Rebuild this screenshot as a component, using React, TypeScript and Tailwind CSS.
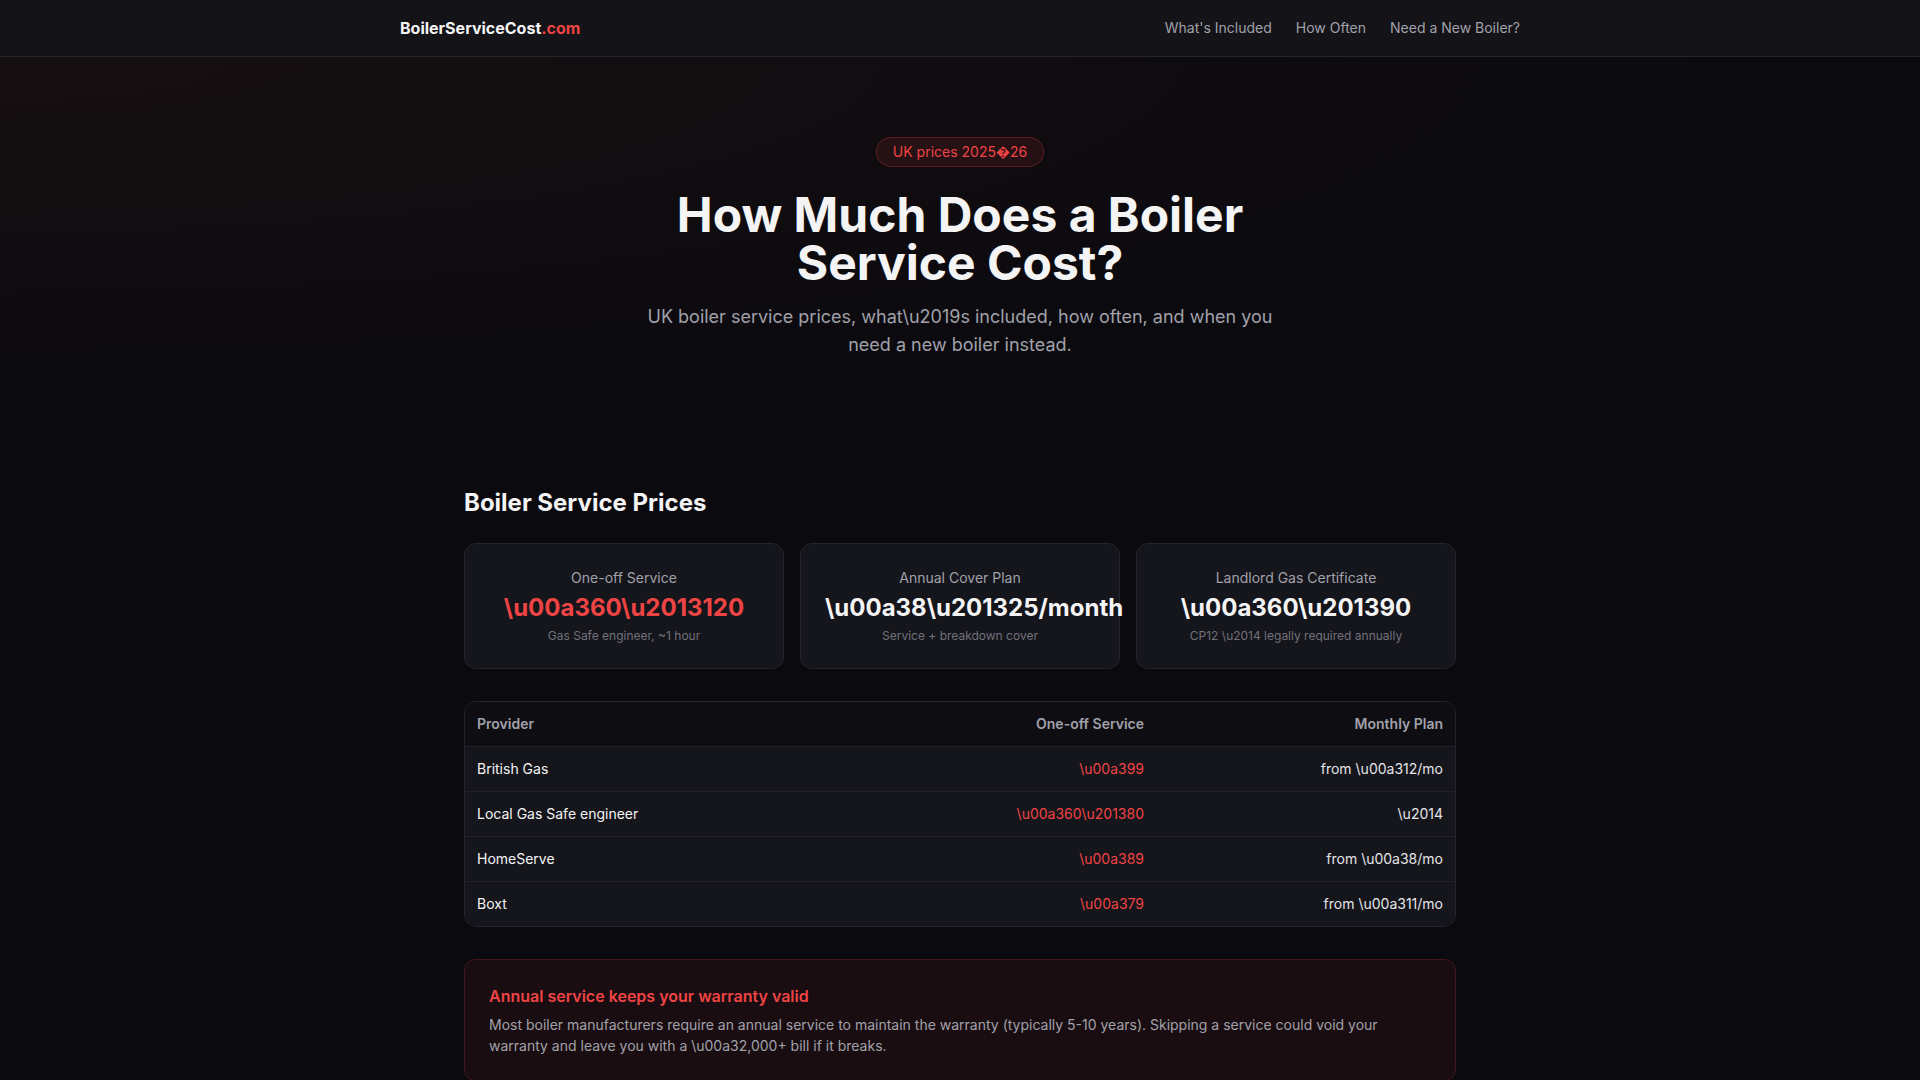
const cards = [
  { label: 'One-off Service', price: '\\u00a360\\u2013120', note: 'Gas Safe engineer, ~1 hour', red: true },
  { label: 'Annual Cover Plan', price: '\\u00a38\\u201325/month', note: 'Service + breakdown cover', red: false },
  { label: 'Landlord Gas Certificate', price: '\\u00a360\\u201390', note: 'CP12 \\u2014 legally required annually', red: false },
];

const providers = [
  { name: 'British Gas', oneOff: '\\u00a399', monthly: 'from \\u00a312/mo' },
  { name: 'Local Gas Safe engineer', oneOff: '\\u00a360\\u201380', monthly: '\\u2014' },
  { name: 'HomeServe', oneOff: '\\u00a389', monthly: 'from \\u00a38/mo' },
  { name: 'Boxt', oneOff: '\\u00a379', monthly: 'from \\u00a311/mo' },
];

function Nav() {
  return (
    <header className="h-[57px] bg-[#131318] border-b border-[#26252f]">
      <div className="max-w-6xl mx-auto px-4 h-full flex items-center justify-between">
        <a className="text-base font-bold text-[#f4f4f5]">
          BoilerServiceCost<span className="text-[#ef4444]">.com</span>
        </a>
        <nav className="flex items-center gap-6 text-sm text-[#a1a1aa]">
          <a>What's Included</a>
          <a>How Often</a>
          <a>Need a New Boiler?</a>
        </nav>
      </div>
    </header>
  );
}

export default function App() {
  return (
    <div className="min-h-screen bg-[#0b0a0f] text-[#f4f4f5] font-['Inter','Noto_Sans',sans-serif]">
      <Nav />

      {/* Hero */}
      <section className="bg-[radial-gradient(ellipse_at_top_left,rgba(120,60,30,0.10),transparent_65%)] pt-20 pb-20 px-4">
        <div className="max-w-2xl mx-auto flex flex-col items-center text-center">
          <span className="inline-block rounded-full border border-[#ef4444]/25 bg-[#ef4444]/10 px-4 py-1 text-sm text-[#ef4444] mb-6">
            {'UK prices 2025\uFFFD26'}
          </span>
          <h1 className="text-5xl leading-none font-bold text-[#f4f4f5]">
            How Much Does a Boiler Service Cost?
          </h1>
          <p className="mt-4 text-lg text-[#a1a1aa]">
            {'UK boiler service prices, what\\u2019s included, how often, and when you need a new boiler instead.'}
          </p>
        </div>
      </section>

      {/* Prices */}
      <section className="max-w-5xl mx-auto px-4 pt-12 pb-16">
        <h2 className="text-2xl font-bold mb-6">Boiler Service Prices</h2>

        <div className="grid grid-cols-3 gap-4 mb-8">
          {cards.map((c) => (
            <div key={c.label} className="rounded-xl border border-[#26252f] bg-[#15151c] p-6 text-center">
              <div className="text-sm text-[#a1a1aa]">{c.label}</div>
              <div className={`mt-1 text-2xl font-bold ${c.red ? 'text-[#ef4444]' : 'text-[#f4f4f5]'}`}>{c.price}</div>
              <div className="mt-1 text-xs text-[#71717a]">{c.note}</div>
            </div>
          ))}
        </div>

        <div className="rounded-xl border border-[#26252f] overflow-hidden">
          <table className="w-full text-sm table-fixed">
            <thead className="bg-[#0e0d12]">
              <tr className="text-[#a1a1aa]">
                <th className="px-3 py-3 text-left font-semibold">Provider</th>
                <th className="px-3 py-3 text-right font-semibold w-[300px]">One-off Service</th>
                <th className="px-3 py-3 text-right font-semibold w-[299px]">Monthly Plan</th>
              </tr>
            </thead>
            <tbody className="bg-[#15151c]">
              {providers.map((p) => (
                <tr key={p.name} className="border-t border-[#22212a]">
                  <td className="px-3 py-3 text-[#f4f4f5]">{p.name}</td>
                  <td className="px-3 py-3 text-right text-[#ef4444]">{p.oneOff}</td>
                  <td className="px-3 py-3 text-right text-[#e4e4e7]">{p.monthly}</td>
                </tr>
              ))}
            </tbody>
          </table>
        </div>

        <div className="mt-8 rounded-xl border border-[#ef4444]/20 bg-[#190d11] p-6">
          <h3 className="text-base font-semibold text-[#ef4444] mb-1.5">Annual service keeps your warranty valid</h3>
          <p className="text-sm leading-[21px] text-[#a1a1aa]">
            {'Most boiler manufacturers require an annual service to maintain the warranty (typically 5-10 years). Skipping a service could void your warranty and leave you with a \\u00a32,000+ bill if it breaks.'}
          </p>
        </div>
      </section>
    </div>
  );
}
